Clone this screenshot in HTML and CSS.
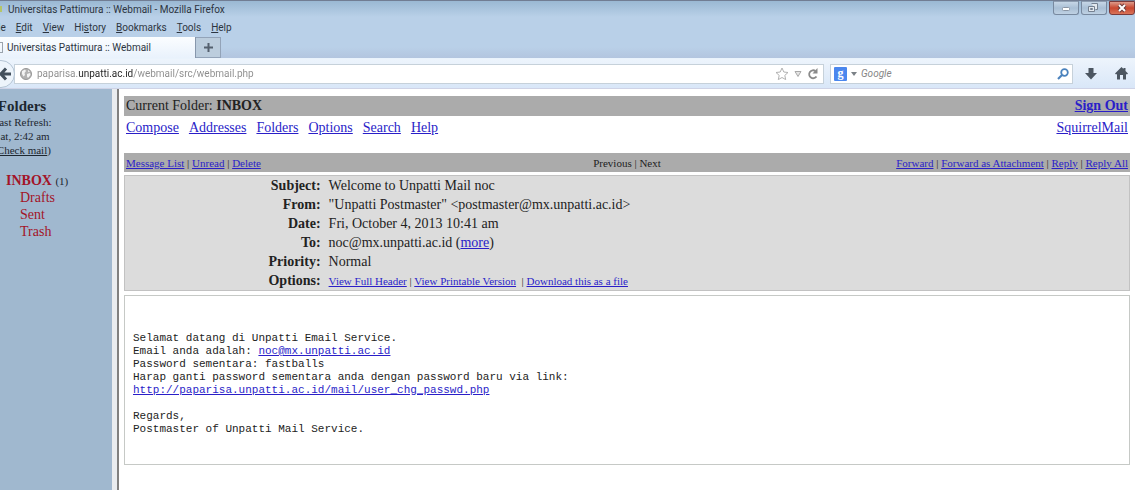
FILE: index.html
```html
<!DOCTYPE html>
<html lang="en">
<head>
<meta charset="utf-8">
<title>Universitas Pattimura :: Webmail</title>
<link rel="stylesheet" href="styles.css">
</head>
<body>
<header class="chrome">
  <div class="titlebar">
    <span class="app-icon"></span>
    <span class="title">Universitas Pattimura :: Webmail - Mozilla Firefox</span>
    <div class="window-buttons">
      <button class="win" aria-label="Minimize"><svg width="24" height="12" viewBox="0 0 24 12"><rect x="8.500" y="5.500" width="7" height="3" rx="1" fill="#fff" stroke="#8a95a4"/></svg></button>
      <button class="win" aria-label="Restore"><svg width="24" height="12" viewBox="0 0 24 12"><path d="M9.500 1.500h6v6h-2M6.500 4.500h6v5h-6zM8.500 6.500h2v1h-2z" fill="#e2e8ee" stroke="#758191"/></svg></button>
      <button class="win close" aria-label="Close"><svg width="24" height="12" viewBox="0 0 24 12"><path d="M9 3l6 6M15 3l-6 6" stroke="#6b3a3a" stroke-width="4"/><path d="M9 3l6 6M15 3l-6 6" stroke="#fff" stroke-width="2"/></svg></button>
    </div>
  </div>
  <nav class="menubar">
    <button>F<u>i</u>le</button><button><u>E</u>dit</button><button><u>V</u>iew</button><button>Hi<u>s</u>tory</button><button><u>B</u>ookmarks</button><button><u>T</u>ools</button><button><u>H</u>elp</button>
  </nav>
  <div class="tabs">
    <button class="tab"><span class="page-icon"></span>Universitas Pattimura :: Webmail</button>
    <button class="new-tab" aria-label="New tab"><svg width="11" height="11" viewBox="0 0 11 11"><path d="M5.500 1v9M1 5.500h9" stroke="#54606e" stroke-width="2"/></svg></button>
  </div>
  <div class="navbar">
    <button class="back" aria-label="Back"><svg width="12" height="14" viewBox="0 0 12 14"><path d="M0 7h11M6 1.500L1 7l5 5.500" fill="none" stroke="#43505d" stroke-width="3"/></svg></button>
    <div class="field address">
      <svg width="12" height="12" viewBox="0 0 12 12"><circle cx="6" cy="6" r="5.500" fill="#b3b3b3" stroke="#969696"/><path d="M2 3l3-1.500L6 3 4.500 5 5 7 3.500 8.500 2 6zM7 6l3-1 .5 2L8 10 7 8.500zM8 2l2 1.500-2 .5z" fill="#f3f3f3"/></svg>
      <input class="url" aria-label="Address" value="paparisa.unpatti.ac.id/webmail/src/webmail.php">
      <button class="icon" aria-label="Bookmark"><svg width="14" height="14" viewBox="0 0 14 14"><path d="M7 1l1.800 4 4.200.500-3.200 2.900.900 4.200L7 10.500l-3.700 2.100.900-4.200L1 5.500 5.200 5z" fill="#fff" stroke="#b2b2b2"/></svg></button>
      <button class="icon" aria-label="Show history"><svg width="8" height="8" viewBox="0 0 8 8"><path d="M1 1.500h6L4 6.500z" fill="#e5e5e5" stroke="#a8a8a8"/></svg></button>
      <button class="icon" aria-label="Reload"><svg width="12" height="12" viewBox="0 0 12 12"><path d="M8.500 3A4 4 0 1 0 9.500 8.500" fill="none" stroke="#8a8a8a" stroke-width="1.800"/><path d="M10.500 0v5.500H5.500z" fill="#8a8a8a"/></svg></button>
    </div>
    <div class="field search">
      <span class="engine">g</span>
      <svg width="6" height="4" viewBox="0 0 6 4"><path d="M0 0h6L3 4z" fill="#7b8187"/></svg>
      <input class="query" aria-label="Search" placeholder="Google">
      <button class="icon" aria-label="Search"><svg width="12" height="12" viewBox="0 0 12 12"><circle cx="7.500" cy="4.500" r="3.300" fill="none" stroke="#4a82bd" stroke-width="1.800"/><path d="M5 7L1 11" stroke="#4a82bd" stroke-width="2.200"/></svg></button>
    </div>
    <button class="icon tool" aria-label="Downloads"><svg width="12" height="13" viewBox="0 0 12 13"><path d="M3.500 1h5v5H12L6 12.500 0 6h3.500z" fill="#4c5661"/></svg></button>
    <button class="icon tool" aria-label="Home"><svg width="13" height="13" viewBox="0 0 13 13"><path d="M6.500 0l2 2V1h2v3L13 6.500l-1 1-1-.5v5.500H8V8H5v4.500H2V7l-1 .5-1-1z" fill="#4c5661"/></svg></button>
  </div>
</header>
<div class="frames">
  <aside class="sidebar">
    <div class="refresh">
      <strong>Folders</strong>
      <span>Last Refresh:</span>
      <span>Sat, 2:42 am</span>
      <span>(<a href="#">Check mail</a>)</span>
    </div>
    <ul class="folders">
      <li class="inbox"><a href="#">INBOX</a> <small>(1)</small></li>
      <li><a href="#">Drafts</a></li>
      <li><a href="#">Sent</a></li>
      <li><a href="#">Trash</a></li>
    </ul>
  </aside>
  <main class="mail">
    <div class="current"><span>Current Folder: <b>INBOX</b></span><a href="#"><b>Sign Out</b></a></div>
    <nav class="links">
      <a href="#">Compose</a><a href="#">Addresses</a><a href="#">Folders</a><a href="#">Options</a><a href="#">Search</a><a href="#">Help</a>
      <a class="brand" href="#">SquirrelMail</a>
    </nav>
    <div class="actions">
      <span><a href="#">Message List</a> | <a href="#">Unread</a> | <a href="#">Delete</a></span>
      <span>Previous | Next</span>
      <span class="right"><a href="#">Forward</a> | <a href="#">Forward as Attachment</a> | <a href="#">Reply</a> | <a href="#">Reply All</a></span>
    </div>
    <table class="headers">
      <tr><th scope="row">Subject:</th><td>Welcome to Unpatti Mail noc</td></tr>
      <tr><th scope="row">From:</th><td>"Unpatti Postmaster" &lt;postmaster@mx.unpatti.ac.id&gt;</td></tr>
      <tr><th scope="row">Date:</th><td>Fri, October 4, 2013 10:41 am</td></tr>
      <tr><th scope="row">To:</th><td>noc@mx.unpatti.ac.id (<a href="#">more</a>)</td></tr>
      <tr><th scope="row">Priority:</th><td>Normal</td></tr>
      <tr><th scope="row">Options:</th><td class="options"><a href="#">View Full Header</a> | <a href="#">View Printable Version</a> &nbsp;| <a href="#">Download this as a file</a></td></tr>
    </table>
    <pre class="message">Selamat datang di Unpatti Email Service.
Email anda adalah: <a href="#">noc@mx.unpatti.ac.id</a>
Password sementara: fastballs
Harap ganti password sementara anda dengan password baru via link:
<a href="#">http://paparisa.unpatti.ac.id/mail/user_chg_passwd.php</a>

Regards,
Postmaster of Unpatti Mail Service.</pre>
  </main>
</div>
</body>
</html>
```

FILE: styles.css
```css
* { box-sizing: border-box; }
body {
  margin: 0;
  min-height: 100vh;
  display: flex;
  flex-direction: column;
  overflow-x: hidden;
  background: #fff;
  color: #222;
  font-family: "Liberation Serif", "Times New Roman", serif;
  font-size: 14px;
}
button, input {
  margin: 0;
  padding: 0;
  border: 0;
  background: none;
  color: inherit;
  font: inherit;
}
svg { display: block; flex: none; }
a { color: #2a1ec8; }

.chrome {
  border-top: 1px solid #717d93;
  background: linear-gradient(#9ab8d3, #b9d0e8 16px, #b9d0e8 46px, #b3c5df 57px);
  color: #2c3440;
  font-family: Roboto, "Noto Sans", sans-serif;
  font-size: 10px;
}
.titlebar { display: flex; height: 16px; align-items: center; }
.app-icon { width: 2px; height: 6px; margin-right: 6px; background: #b5c56a; }
.window-buttons { display: flex; gap: 2px; margin-left: auto; align-self: flex-start; }
.win {
  width: 26px;
  height: 14px;
  border: 1px solid #78899f;
  border-top-color: #8d9db1;
  border-radius: 0 0 3px 3px;
  background: linear-gradient(#c6d6e6, #a9bfd5 50%, #bfd1e3);
}
.close { border-color: #7b3a3a; background: linear-gradient(#dd9b8b, #c9472f 50%, #d97459); }
.menubar { display: flex; gap: 10px; height: 20px; align-items: center; margin-left: -10px; }
.tabs { display: flex; height: 21px; }
.tab {
  display: flex;
  align-items: center;
  gap: 4px;
  width: 196px;
  background: linear-gradient(#fbfdff, #e9f2fc);
  border-right: 1px solid #8797ac;
}
.page-icon { width: 3px; height: 11px; border: 1px solid #9aa3ad; border-left: 0; }
.new-tab {
  width: 25px;
  display: grid;
  place-items: center;
  border: 1px solid #93a3b8;
  border-width: 1px 1px 1px 0;
  background: #bccddd;
}
.navbar {
  display: flex;
  align-items: center;
  height: 31px;
  padding-right: 2px;
  border-top: 1px solid #eaf3fc;
  border-bottom: 1px solid #cfd3e6;
  background: linear-gradient(#edf4fc, #d9e7f8);
}
.back {
  z-index: 1;
  width: 25px;
  height: 28px;
  margin-left: -10px;
  padding-left: 9px;
  border: 1px solid #b4c4d4;
  border-radius: 0 14px 14px 0;
  background: #edf4fb;
}
.field { display: flex; align-items: center; height: 20px; border: 1px solid #c6d1da; background: #fff; }
.address { flex: 1; gap: 5px; margin-left: -1px; padding: 0 4px 0 5px; }
.url {
  flex: 1;
  min-width: 0;
  background: linear-gradient(90deg, #8c8c8c 41px, #222 41px, #222 96px, #8c8c8c 96px);
  background-clip: text;
  -webkit-background-clip: text;
  -webkit-text-fill-color: transparent;
}
.search { width: 243px; margin: 0 7px 0 6px; padding: 0 3px; gap: 4px; }
.engine {
  width: 13px;
  height: 14px;
  border-radius: 1px;
  background: #4b87ee;
  color: #fff;
  font: bold 12px/12px "Liberation Serif", serif;
  text-align: center;
}
.query { flex: 1; min-width: 0; font-style: italic; }
.query::placeholder { color: #858585; opacity: 1; }
.tool { margin-right: 8px; padding: 0 5px; }
.tool:last-child { margin: 0; }

.frames { display: flex; flex: 1; }
.sidebar { width: 117px; border-right: 5px solid #e9ecef; background: #a0b8cf; color: #1d2730; overflow: hidden; }
.refresh {
  display: flex;
  flex-direction: column;
  align-items: center;
  width: 66px;
  margin: 9px 0 0 -11px;
  font-size: 11px;
  line-height: 14px;
  white-space: nowrap;
}
.refresh strong { font-size: 15px; line-height: 17px; }
.refresh a { color: inherit; }
.folders { margin: 15px 0 0; padding: 0 0 0 20px; list-style: none; line-height: 17px; }
.folders a { color: #a31428; text-decoration: none; }
.inbox { margin-left: -14px; }
.inbox a { font-weight: bold; }
.inbox small { font-size: 11px; line-height: 1; }

.mail { flex: 1; padding: 7px 5px 24px; border-left: 2px solid #808080; }
.current { display: flex; justify-content: space-between; align-items: center; height: 20px; padding: 0 2px; background: #ababab; }
.links { display: flex; gap: 10px; height: 37px; padding: 4px 2px 0; }
.brand { margin-left: auto; }
.actions {
  display: grid;
  grid-template-columns: 1fr auto 1fr;
  align-items: center;
  height: 19px;
  padding: 0 2px;
  background: #ababab;
  font-size: 11px;
}
.right { text-align: right; }
.headers {
  width: 100%;
  margin: 3px 0 4px;
  border: 1px solid #c2c2c2;
  border-spacing: 2px 0;
  background: #dcdcdc;
}
.headers th, .headers td { height: 19px; padding: 1px 0 0; text-align: left; line-height: 18px; }
.headers th { width: 20%; padding-right: 6px; text-align: right; }
.headers .options { font-size: 11px; }
.message {
  margin: 0;
  padding: 36px 8px 28px;
  border: 1px solid #c6c9c6;
  font: 11px/13px "Liberation Mono", "Courier New", monospace;
}
```
